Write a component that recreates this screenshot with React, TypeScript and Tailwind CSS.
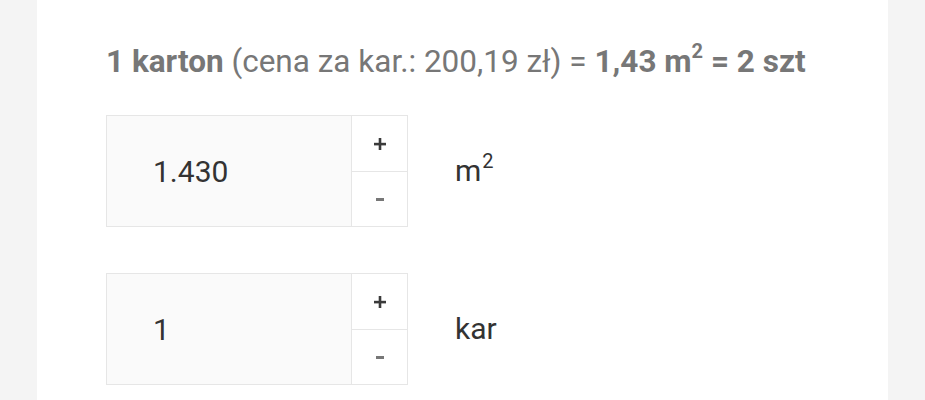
export default function App() {
  const Box = ({ value, unit, sup }: { value: string; unit: string; sup?: boolean }) => (
    <div className="flex items-center">
      <div className="flex h-[112px] w-[302px] border border-[#e6e6e6]">
        <div className="flex flex-1 items-center bg-[#fafafa] pl-[46px] text-[30px] text-[#333]">{value}</div>
        <div className="flex w-[56px] flex-col border-l border-[#e6e6e6] bg-white">
          <div className="flex flex-1 items-center justify-center border-b border-[#e6e6e6]">
            <svg width="12" height="12" viewBox="0 0 12 12" className="mt-[1px]">
              <rect x="0" y="4.8" width="12" height="2.6" fill="#3a3a3a" />
              <rect x="4.7" y="0" width="2.6" height="12" fill="#3a3a3a" />
            </svg>
          </div>
          <div className="flex flex-1 items-center justify-center">
            <span className="mt-[2px] block h-[3px] w-[8px] bg-[#777]" />
          </div>
        </div>
      </div>
      <div className="ml-[47px] text-[30px] leading-none text-[#333]">
        {unit}
        {sup && <sup className="-top-[13px] ml-[1px] text-[20px]">2</sup>}
      </div>
    </div>
  );
  return (
    <div className="flex h-[400px] w-[925px] bg-[#f4f4f4] px-[37px] font-['Roboto',sans-serif]">
      <div className="flex flex-1 flex-col bg-white pl-[69px] pt-[42px]">
        <div className="whitespace-nowrap text-[31.5px] leading-[40px] text-[#777]">
          <span className="font-bold">1 karton</span> (cena za kar.: 200,19 zł) ={" "}
          <span className="font-bold">
            1,43 m<sup className="-top-[14px] text-[20px]">2</sup> = 2 szt
          </span>
        </div>
        <div className="mt-[33px] flex flex-col gap-[46px]">
          <Box value="1.430" unit="m" sup />
          <Box value="1" unit="kar" />
        </div>
      </div>
    </div>
  );
}
